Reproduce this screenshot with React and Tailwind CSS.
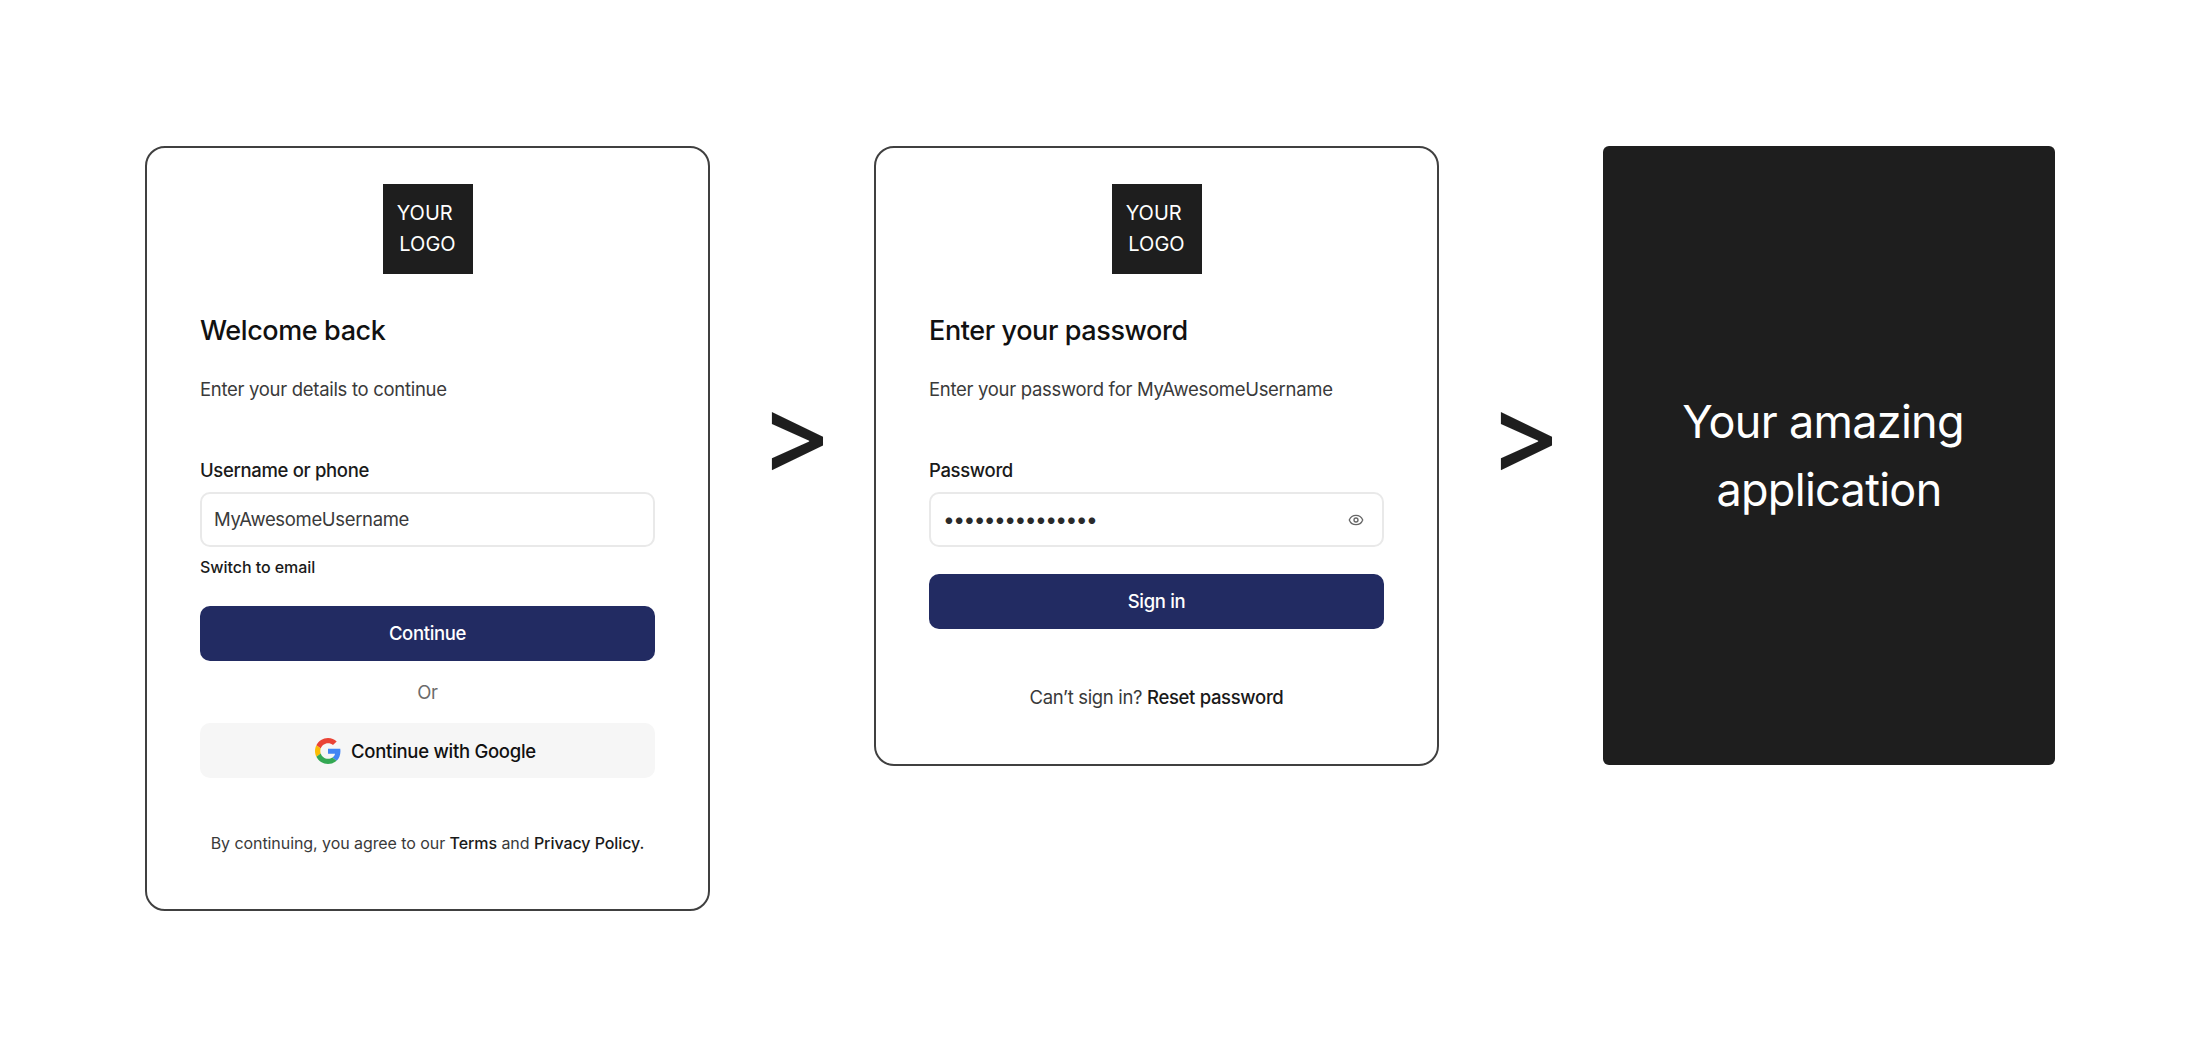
import React from "react";
import { Eye } from "lucide-react";

const GoogleIcon = () => (
  <svg width="26" height="26" viewBox="0 0 48 48">
    <path fill="#EA4335" d="M24 9.5c3.54 0 6.71 1.22 9.21 3.6l6.85-6.85C35.9 2.38 30.47 0 24 0 14.62 0 6.51 5.38 2.56 13.22l7.98 6.19C12.43 13.72 17.74 9.5 24 9.5z" />
    <path fill="#4285F4" d="M46.98 24.55c0-1.57-.15-3.09-.38-4.55H24v9.02h12.94c-.58 2.96-2.26 5.48-4.78 7.18l7.73 6c4.51-4.18 7.09-10.36 7.09-17.65z" />
    <path fill="#FBBC05" d="M10.53 28.59c-.48-1.45-.76-2.99-.76-4.59s.27-3.14.76-4.59l-7.98-6.19C.92 16.46 0 20.12 0 24c0 3.88.92 7.54 2.56 10.78l7.97-6.19z" />
    <path fill="#34A853" d="M24 48c6.48 0 11.93-2.13 15.89-5.81l-7.73-6c-2.15 1.45-4.92 2.3-8.16 2.3-6.26 0-11.57-4.22-13.47-9.91l-7.98 6.19C6.51 42.62 14.62 48 24 48z" />
  </svg>
);

const Logo = () => (
  <div className="mx-auto flex h-[90px] w-[90px] items-center justify-center whitespace-pre bg-[#1e1e1e] text-center text-[20px] leading-[31px] text-white">
    {"YOUR \nLOGO"}
  </div>
);

const Arrow = () => (
  <div className="flex w-[164px] justify-center pl-[8px] pt-[237px]">
    <span className="text-[108px] font-medium leading-[100px] text-[#1e1e1e]">&gt;</span>
  </div>
);

const Heading = ({ title, subtitle }) => (
  <>
    <h1 className="mt-[40px] text-[27px] font-[450] leading-[34px] tracking-[-0.4px] text-[#111111]">{title}</h1>
    <p className="mt-[27px] text-[18.5px] leading-[28px] tracking-[-0.3px] text-[#3a3a3a]">{subtitle}</p>
  </>
);

const Field = ({ label, children }) => (
  <>
    <label className="mt-[53px] block text-[18.5px] font-[450] leading-[28px] tracking-[-0.34px] text-[#1a1a1a]">{label}</label>
    <div className="mt-[8px] flex h-[55px] items-center justify-between rounded-[10px] border-2 border-[#e9e9e9] pl-[12px] pr-[13px] pt-[1px] text-[18.5px] tracking-[-0.34px] text-[#3a3a3a]">
      {children}
    </div>
  </>
);

const PrimaryButton = ({ children, className }) => (
  <button className={`flex h-[55px] w-full items-center justify-center rounded-[10px] bg-[#222b62] pt-[1px] text-[18.5px] font-[450] tracking-[-0.34px] text-white ${className}`}>
    {children}
  </button>
);

export default function App() {
  return (
    <div className="flex h-[1057px] w-[2200px] items-start bg-white pl-[145px] pt-[146px] font-['Inter',sans-serif]">
      <div className="h-[765px] w-[565px] rounded-[20px] border-2 border-[#404040] px-[53px] pt-[36px]">
        <Logo />
        <Heading title="Welcome back" subtitle="Enter your details to continue" />
        <Field label="Username or phone">
          <span>MyAwesomeUsername</span>
        </Field>
        <div className="mt-[8px] text-[16px] font-medium leading-[24px] tracking-[-0.05px] text-[#1a1a1a]">Switch to email</div>
        <PrimaryButton className="mt-[27px]">Continue</PrimaryButton>
        <div className="mt-[17px] text-center text-[18.5px] leading-[28px] tracking-[-0.34px] text-[#6b6b6b]">Or</div>
        <button className="mt-[17px] flex h-[55px] w-full items-center justify-center gap-[10px] rounded-[10px] bg-[#f6f6f6] pr-[4px] text-[18.5px] font-[450] tracking-[-0.28px] text-[#111111]">
          <GoogleIcon />
          <span className="pt-[2px]">Continue with Google</span>
        </button>
        <p className="mt-[53px] text-center text-[16px] leading-[24px] tracking-[-0.07px] text-[#3a3a3a]">
          By continuing, you agree to our <span className="font-[450] text-[#1a1a1a]">Terms</span> and{" "}
          <span className="font-[450] text-[#1a1a1a]">Privacy Policy.</span>
        </p>
      </div>

      <Arrow />

      <div className="h-[620px] w-[565px] rounded-[20px] border-2 border-[#404040] px-[53px] pt-[36px]">
        <Logo />
        <Heading title="Enter your password" subtitle="Enter your password for MyAwesomeUsername" />
        <Field label="Password">
          <span className="text-[21px] tracking-[-1.6px] text-[#2a2a2a]">•••••••••••••••</span>
          <Eye size={16} className="mr-[5px] text-[#666666]" />
        </Field>
        <PrimaryButton className="mt-[27px]">Sign in</PrimaryButton>
        <p className="mt-[54px] text-center text-[18.5px] leading-[28px] tracking-[-0.34px] text-[#3a3a3a]">
          Can’t sign in? <span className="font-[450] text-[#1a1a1a]">Reset password</span>
        </p>
      </div>

      <Arrow />

      <div className="flex h-[619px] w-[452px] items-center justify-center whitespace-pre rounded-[6px] bg-[#1e1e1e] text-center text-[45px] leading-[68px] tracking-[-0.7px] text-white">
        {"Your amazing \napplication"}
      </div>
    </div>
  );
}
